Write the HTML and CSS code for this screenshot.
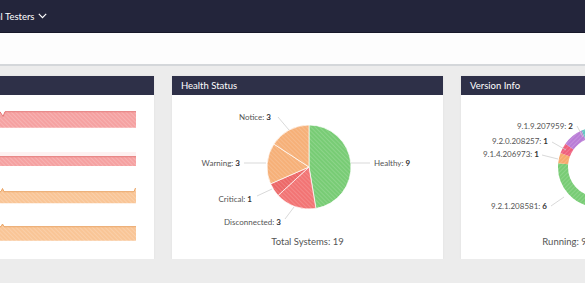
FILE: index.html
```html
<!DOCTYPE html>
<html lang="en">
<head>
	<meta charset="UTF-8">
	<title>Dashboard</title>
	<link rel="stylesheet" href="styles.css">
</head>
<body>
<div class="page">
	<div class="navbar">
		<div class="nav-item">Global Testers
			<svg class="caret" width="9" height="6" viewBox="0 0 9 6"><polyline points="0.8,0.8 4.5,4.6 8.2,0.8"/></svg>
		</div>
	</div>
	<div class="subbar"></div>

	<div class="panels">
		<!-- alerts over time -->
		<div class="panel">
			<div class="panel-head">Alert History</div>
			<svg class="chart" width="271" height="164" viewBox="0 0 271 164">
				<defs>
					<pattern id="hr" width="3" height="3" patternUnits="userSpaceOnUse" patternTransform="rotate(-45)"><rect width="3" height="3" fill="#f5a1a1"/><line x1="0" y1="0" x2="0" y2="3" stroke="#fff" stroke-opacity=".35"/></pattern>
					<pattern id="ho" width="3" height="3" patternUnits="userSpaceOnUse" patternTransform="rotate(-45)"><rect width="3" height="3" fill="#f9c596"/><line x1="0" y1="0" x2="0" y2="3" stroke="#fff" stroke-opacity=".35"/></pattern>
				</defs>
				<path d="M18,16.7 L117,16.7 L120,21.5 L122,16.7 L253,16.7 L253,32.7 L18,32.7 Z" fill="url(#hr)"/>
				<polyline class="edge-r" points="18,16.7 117,16.7 120,21.5 122,16.7 253,16.7"/>

				<path d="M18,57 L253,57 L253,61.7 L18,61.7 Z" fill="#f5a1a1" opacity=".15"/>
				<path d="M18,61.7 L253,61.7 L253,71 L18,71 Z" fill="url(#hr)"/>
				<polyline class="edge-r" points="18,61.7 253,61.7"/>

				<path d="M18,96.7 L118,96.7 L119.5,93.5 L121,96.7 L251,96.7 L252.5,93 L253,96.7 L253,108.3 L18,108.3 Z" fill="url(#ho)"/>
				<polyline class="edge-o" points="18,96.7 118,96.7 119.5,93.5 121,96.7 251,96.7 252.5,93"/>

				<path d="M18,131.7 L118,131.7 L119.5,129 L121,131.7 L253,131.7 L253,145.7 L18,145.7 Z" fill="url(#ho)"/>
				<polyline class="edge-o" points="18,131.7 118,131.7 119.5,129 121,131.7 253,131.7"/>
			</svg>
		</div>

		<!-- health pie -->
		<div class="panel">
			<div class="panel-head">Health Status</div>
			<svg class="chart" width="271" height="140" viewBox="0 0 271 140">
				<defs>
					<pattern id="pg" width="3" height="3" patternUnits="userSpaceOnUse" patternTransform="rotate(-45)"><rect width="3" height="3" fill="#78cc75"/><line x1="0" y1="0" x2="0" y2="3" stroke="#fff" stroke-opacity=".3"/></pattern>
					<pattern id="pr" width="3" height="3" patternUnits="userSpaceOnUse" patternTransform="rotate(-45)"><rect width="3" height="3" fill="#f27474"/><line x1="0" y1="0" x2="0" y2="3" stroke="#fff" stroke-opacity=".3"/></pattern>
					<pattern id="pc" width="3" height="3" patternUnits="userSpaceOnUse" patternTransform="rotate(-45)"><rect width="3" height="3" fill="#ec6868"/><line x1="0" y1="0" x2="0" y2="3" stroke="#fff" stroke-opacity=".3"/></pattern>
					<pattern id="po" width="3" height="3" patternUnits="userSpaceOnUse" patternTransform="rotate(-45)"><rect width="3" height="3" fill="#f6b078"/><line x1="0" y1="0" x2="0" y2="3" stroke="#fff" stroke-opacity=".3"/></pattern>
				</defs>
				<g class="slices">
					<path d="M137,72 L137,30 A42,42 0 0 1 143.91,113.43 Z" fill="url(#pg)"/>
					<path d="M137,72 L143.91,113.43 A42,42 0 0 1 106.10,100.45 Z" fill="url(#pr)"/>
					<path d="M137,72 L106.10,100.45 A42,42 0 0 1 98.54,88.87 Z" fill="url(#pc)"/>
					<path d="M137,72 L98.54,88.87 A42,42 0 0 1 101.84,49.03 Z" fill="url(#po)"/>
					<path d="M137,72 L101.84,49.03 A42,42 0 0 1 137,30 Z" fill="url(#po)"/>
				</g>
				<g class="leaders">
					<line x1="106" y1="22" x2="117" y2="35"/>
					<line x1="72" y1="68" x2="94" y2="68"/>
					<line x1="179" y1="68" x2="198" y2="68"/>
					<line x1="85" y1="101" x2="100" y2="94"/>
					<line x1="113" y1="124" x2="122" y2="112"/>
				</g>
				<text class="lbl" x="99" y="25" text-anchor="end">Notice: <tspan>3</tspan></text>
				<text class="lbl" x="68" y="71" text-anchor="end">Warning: <tspan>3</tspan></text>
				<text class="lbl" x="202" y="71">Healthy: <tspan>9</tspan></text>
				<text class="lbl" x="80" y="107" text-anchor="end">Critical: <tspan>1</tspan></text>
				<text class="lbl" x="109" y="130" text-anchor="end">Disconnected: <tspan>3</tspan></text>
			</svg>
			<div class="caption">Total Systems: 19</div>
		</div>

		<!-- versions donut -->
		<div class="panel">
			<div class="panel-head">Version Info</div>
			<svg class="chart" width="271" height="140" viewBox="0 0 271 140">
				<defs>
					<pattern id="vg" width="3" height="3" patternUnits="userSpaceOnUse" patternTransform="rotate(-45)"><rect width="3" height="3" fill="#78cc75"/><line x1="0" y1="0" x2="0" y2="3" stroke="#fff" stroke-opacity=".3"/></pattern>
					<pattern id="vo" width="3" height="3" patternUnits="userSpaceOnUse" patternTransform="rotate(-45)"><rect width="3" height="3" fill="#f6a96c"/><line x1="0" y1="0" x2="0" y2="3" stroke="#fff" stroke-opacity=".3"/></pattern>
					<pattern id="vp" width="3" height="3" patternUnits="userSpaceOnUse" patternTransform="rotate(-45)"><rect width="3" height="3" fill="#ef5f7c"/><line x1="0" y1="0" x2="0" y2="3" stroke="#fff" stroke-opacity=".3"/></pattern>
					<pattern id="vv" width="3" height="3" patternUnits="userSpaceOnUse" patternTransform="rotate(-45)"><rect width="3" height="3" fill="#b97cd6"/><line x1="0" y1="0" x2="0" y2="3" stroke="#fff" stroke-opacity=".3"/></pattern>
					<pattern id="vb" width="3" height="3" patternUnits="userSpaceOnUse" patternTransform="rotate(-45)"><rect width="3" height="3" fill="#6aa6e0"/><line x1="0" y1="0" x2="0" y2="3" stroke="#fff" stroke-opacity=".3"/></pattern>
					<pattern id="vt" width="3" height="3" patternUnits="userSpaceOnUse" patternTransform="rotate(-45)"><rect width="3" height="3" fill="#62c4c0"/><line x1="0" y1="0" x2="0" y2="3" stroke="#fff" stroke-opacity=".3"/></pattern>
				</defs>
				<g class="ring" transform="rotate(-90 137 72)">
					<circle cx="137" cy="72" r="35" stroke="url(#vb)" stroke-dasharray="58.03 219.91" stroke-dashoffset="0"/>
					<circle cx="137" cy="72" r="35" stroke="url(#vt)" stroke-dasharray="54.98 219.91" stroke-dashoffset="-58.03"/>
					<circle cx="137" cy="72" r="35" stroke="url(#vg)" stroke-dasharray="54.98 219.91" stroke-dashoffset="-113.01"/>
					<circle cx="137" cy="72" r="35" stroke="url(#vo)" stroke-dasharray="9.16 219.91" stroke-dashoffset="-167.99"/>
					<circle cx="137" cy="72" r="35" stroke="url(#vp)" stroke-dasharray="9.16 219.91" stroke-dashoffset="-177.15"/>
					<circle cx="137" cy="72" r="35" stroke="url(#vv)" stroke-dasharray="18.33 219.91" stroke-dashoffset="-186.31"/>
					<circle cx="137" cy="72" r="35" stroke="url(#vt)" stroke-dasharray="15.27 219.91" stroke-dashoffset="-204.64"/>
				</g>
				<g class="leaders">
					<line x1="116" y1="31" x2="122" y2="42"/>
					<line x1="91" y1="47" x2="105" y2="55"/>
					<line x1="81" y1="60" x2="97" y2="64"/>
					<line x1="90" y1="111" x2="103" y2="102"/>
				</g>
				<text class="lbl" x="112" y="34" text-anchor="end">9.1.9.207959: <tspan>2</tspan></text>
				<text class="lbl" x="87" y="49" text-anchor="end">9.2.0.208257: <tspan>1</tspan></text>
				<text class="lbl" x="78" y="62" text-anchor="end">9.1.4.206973: <tspan>1</tspan></text>
				<text class="lbl" x="86" y="114" text-anchor="end">9.2.1.208581: <tspan>6</tspan></text>
			</svg>
			<div class="caption">Running: 9.2.1.208581 (6)</div>
		</div>
	</div>
</div>
</body>
</html>
```

FILE: styles.css
```css
html,body{margin:0;padding:0}
body{background:#ececec;font-family:Lato,"Open Sans",sans-serif;overflow:hidden;color:#555}

/* the view is scrolled to the right by 117px */
.page{margin-left:-117px;width:702px}

.navbar{height:32px;background:#23253b;border-bottom:1px solid #17182a;display:flex;align-items:center;padding-left:93px}
.nav-item{color:#fff;font-size:9.5px;display:flex;align-items:center;gap:4px}
.caret{fill:none;stroke:#fff;stroke-width:1.2}

.subbar{height:31px;background:#fdfdfd;border-bottom:2px solid #d4d7da}

.panels{display:grid;grid-template-columns:repeat(3,271px);gap:18px;margin-top:10px}
.panel{background:#fff;height:183px;box-shadow:0 0 2px rgba(0,0,0,.06)}
.panel-head{height:19px;line-height:19px;background:#2e3048;color:#fff;font-size:9.5px;padding-left:9px}
.chart{display:block}

.edge-r{fill:none;stroke:#e37474;stroke-width:1}
.edge-o{fill:none;stroke:#e9a262;stroke-width:1}

.slices path{stroke:#fff;stroke-width:.7}
.ring circle{fill:none;stroke-width:10}
.leaders line{stroke:#cfcfcf;stroke-width:.8}
.lbl{font-size:8px;fill:#555}
.lbl tspan{font-weight:700;fill:#333}

.caption{height:14px;line-height:14px;font-size:9.5px;text-align:center;color:#555;padding-bottom:10px}
```
